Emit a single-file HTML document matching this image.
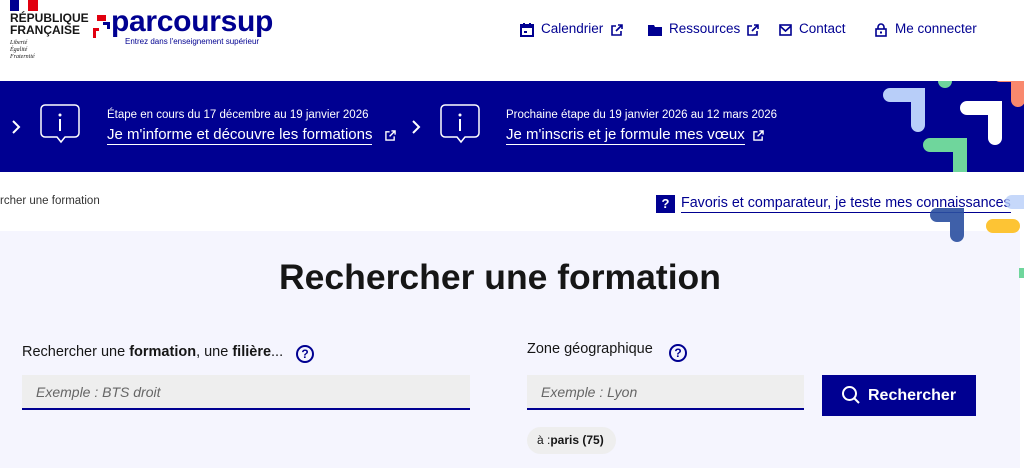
<!DOCTYPE html>
<html><head><meta charset="utf-8"><style>
*{box-sizing:border-box;margin:0;padding:0}
body{width:1024px;height:468px;overflow:hidden;position:relative;background:#fff;font-family:"Liberation Sans","DejaVu Sans",sans-serif;color:#161616}
.a{position:absolute}
.nav{color:#000091;font-size:13.5px;top:21px}
.banner{top:81px;left:0;width:1024px;height:91px;background:#000091;overflow:hidden}
.w{color:#fff;white-space:nowrap}
.inp{background:#eee;border-bottom:2px solid #000091;height:35px;top:375px;font-style:italic;color:#666;font-size:14px;padding:9px 14px}
.q{width:18px;height:18px;border:2px solid #000091;border-radius:50%;color:#000091;font-size:12px;font-weight:bold;text-align:center;line-height:14px}
</style></head><body>
<!-- header -->
<div class="a" style="left:10px;top:0;width:9px;height:11px;background:#000091"></div>
<div class="a" style="left:19px;top:0;width:9px;height:11px;background:#fff"></div>
<div class="a" style="left:28px;top:0;width:10px;height:11px;background:#e1000f"></div>
<div class="a" style="left:10px;top:12px;font-size:12px;font-weight:bold;line-height:12px">RÉPUBLIQUE<br>FRANÇAISE</div>
<div class="a" style="left:10px;top:40px;font-size:6px;font-style:italic;font-family:'Liberation Serif',serif;line-height:7px">Liberté<br>Égalité<br>Fraternité</div>
<div class="a" style="left:97px;top:15px;width:9px;height:6px;background:#e1000f"></div>
<div class="a" style="left:93px;top:28px;width:6px;height:10px;border-top:3px solid #e1000f;border-left:3px solid #e1000f"></div>
<div class="a" style="left:103px;top:22px;width:7px;height:7px;border-top:3px solid #000091;border-right:3px solid #000091"></div>
<div class="a" style="left:111px;top:5px;font-size:30px;font-weight:bold;color:#000091;letter-spacing:-0.3px">parcoursup</div>
<div class="a" style="left:125px;top:37px;font-size:8px;color:#000091">Entrez dans l'enseignement supérieur</div>
<!-- nav -->
<svg class="a" style="left:520px;top:23px" width="14" height="14" viewBox="0 0 14 14"><rect x="1" y="2" width="12" height="11" fill="none" stroke="#000091" stroke-width="2"/><rect x="1" y="2" width="12" height="3" fill="#000091"/><rect x="3" y="0" width="2" height="3" fill="#000091"/><rect x="9" y="0" width="2" height="3" fill="#000091"/><rect x="4" y="8" width="3" height="2" fill="#000091"/></svg>
<div class="a nav" style="left:541px">Calendrier</div>
<svg class="a" style="left:611px;top:24px" width="12" height="12" viewBox="0 0 12 12"><path d="M5 2H1v9h9V7M7 1h4v4M11 1L5 7" fill="none" stroke="#000091" stroke-width="1.6"/></svg>
<svg class="a" style="left:648px;top:24px" width="14" height="12" viewBox="0 0 14 12"><path d="M0 1h6l1 2h7v9H0z" fill="#000091"/></svg>
<div class="a nav" style="left:669px">Ressources</div>
<svg class="a" style="left:747px;top:24px" width="12" height="12" viewBox="0 0 12 12"><path d="M5 2H1v9h9V7M7 1h4v4M11 1L5 7" fill="none" stroke="#000091" stroke-width="1.6"/></svg>
<svg class="a" style="left:779px;top:24px" width="13" height="12" viewBox="0 0 13 12"><rect x="1" y="1" width="11" height="10" fill="none" stroke="#000091" stroke-width="1.6"/><path d="M1 2l5.5 5L12 2" fill="none" stroke="#000091" stroke-width="1.6"/></svg>
<div class="a nav" style="left:799px">Contact</div>
<svg class="a" style="left:875px;top:23px" width="12" height="14" viewBox="0 0 12 14"><path d="M3 6V4a3 3 0 016 0v2" fill="none" stroke="#000091" stroke-width="1.6"/><rect x="1" y="6" width="10" height="7" fill="none" stroke="#000091" stroke-width="1.6"/><rect x="5" y="8.5" width="2" height="2" fill="#000091"/></svg>
<div class="a nav" style="left:895px">Me connecter</div>
<!-- banner -->
<div class="a banner">
<svg class="a" style="left:11px;top:39px" width="10" height="14" viewBox="0 0 10 14"><path d="M2 1l6 6-6 6" fill="none" stroke="#fff" stroke-width="2"/></svg>
<svg class="a" style="left:39px;top:22px" width="44" height="44" viewBox="0 0 44 44"><path d="M6 2h30a4 4 0 014 4v24a4 4 0 01-4 4H26l-4 5-4-5H6a4 4 0 01-4-4V6a4 4 0 014-4z" fill="none" stroke="#fff" stroke-width="1.5"/><circle cx="21" cy="12" r="1.5" fill="#fff"/><rect x="20" y="16" width="2" height="12" fill="#fff"/></svg>
<div class="a w" style="left:107px;top:28px;font-size:11.5px">Étape en cours du 17 décembre au 19 janvier 2026</div>
<div class="a w" style="left:107px;top:45px;font-size:15px;border-bottom:1px solid #fff;padding-bottom:1px">Je m'informe et découvre les formations</div>
<svg class="a" style="left:385px;top:49px" width="11" height="11" viewBox="0 0 12 12"><path d="M5 2H1v9h9V7M7 1h4v4M11 1L5 7" fill="none" stroke="#fff" stroke-width="1.5"/></svg>
<svg class="a" style="left:411px;top:39px" width="10" height="14" viewBox="0 0 10 14"><path d="M2 1l6 6-6 6" fill="none" stroke="#fff" stroke-width="2"/></svg>
<svg class="a" style="left:439px;top:22px" width="44" height="44" viewBox="0 0 44 44"><path d="M6 2h30a4 4 0 014 4v24a4 4 0 01-4 4H26l-4 5-4-5H6a4 4 0 01-4-4V6a4 4 0 014-4z" fill="none" stroke="#fff" stroke-width="1.5"/><circle cx="21" cy="12" r="1.5" fill="#fff"/><rect x="20" y="16" width="2" height="12" fill="#fff"/></svg>
<div class="a w" style="left:506px;top:28px;font-size:11.5px">Prochaine étape du 19 janvier 2026 au 12 mars 2026</div>
<div class="a w" style="left:506px;top:45px;font-size:15px;border-bottom:1px solid #fff;padding-bottom:1px">Je m'inscris et je formule mes vœux</div>
<svg class="a" style="left:753px;top:49px" width="11" height="11" viewBox="0 0 12 12"><path d="M5 2H1v9h9V7M7 1h4v4M11 1L5 7" fill="none" stroke="#fff" stroke-width="1.5"/></svg>
<svg class="a" style="left:860px;top:-6px" width="164" height="97" viewBox="860 75 164 97"><g fill="none" stroke-linecap="round" stroke-width="14"><path d="M890 95h28v30" stroke="#b8cef9"/><path d="M945 81v-20" stroke="#6fd69c"/><path d="M967 108h28v30" stroke="#fff"/><path d="M930 145h30v40" stroke="#6fd69c"/><path d="M1000 75h18v25" stroke="#f9886d"/></g></svg>
</div>
<!-- breadcrumb -->
<div class="a" style="left:0;top:195px;font-size:11.5px;color:#333">rcher une formation</div>
<div class="a" style="left:656px;top:195px;width:19px;height:18px;background:#000091;color:#fff;font-size:13px;font-weight:bold;text-align:center;line-height:18px">?</div>
<div class="a" style="left:681px;top:195px;font-size:14.3px;color:#000091;border-bottom:1px solid #000091;padding-bottom:1px;white-space:nowrap">Favoris et comparateur, je teste mes connaissances</div>
<!-- main -->
<div class="a" style="left:0;top:231px;width:1020px;height:237px;background:#f5f5fe"></div>
<svg class="a" style="left:920px;top:195px" width="104" height="90" viewBox="920 195 104 90"><g fill="none" stroke-linecap="round" stroke-width="14"><path d="M1012 202h20" stroke="#b8cef9" opacity=".8"/><path d="M937 215h20v20" stroke="#2a4fa0" opacity=".9"/><path d="M993 226h20" stroke="#fdc434"/></g><rect x="1019" y="268" width="5" height="10" fill="#6fd69c"/></svg>
<div class="a" style="left:0;width:1000px;top:257px;text-align:center;font-size:35.5px;font-weight:bold;color:#161616">Rechercher une formation</div>
<div class="a" style="left:22px;top:344px;font-size:14.5px">Rechercher une <b>formation</b>, une <b>filière</b>...</div>
<div class="a q" style="left:296px;top:345px">?</div>
<div class="a inp" style="left:22px;width:448px">Exemple : BTS droit</div>
<div class="a" style="left:527px;top:341px;font-size:14.5px">Zone géographique</div>
<div class="a q" style="left:669px;top:344px">?</div>
<div class="a inp" style="left:527px;width:277px">Exemple : Lyon</div>
<div class="a" style="left:822px;top:375px;width:154px;height:41px;background:#000091;color:#fff;font-size:16px;font-weight:bold;line-height:41px;padding-left:46px">Rechercher</div>
<svg class="a" style="left:841px;top:385px" width="20" height="20" viewBox="0 0 20 20"><circle cx="8.5" cy="8.5" r="6.5" fill="none" stroke="#fff" stroke-width="2"/><path d="M13.5 13.5l4.5 4.5" stroke="#fff" stroke-width="2"/></svg>
<div class="a" style="left:527px;top:427px;width:89px;height:27px;background:#eee;border-radius:14px;font-size:12px;line-height:27px;padding-left:10px">à :<b>paris (75)</b></div>
</body></html>
